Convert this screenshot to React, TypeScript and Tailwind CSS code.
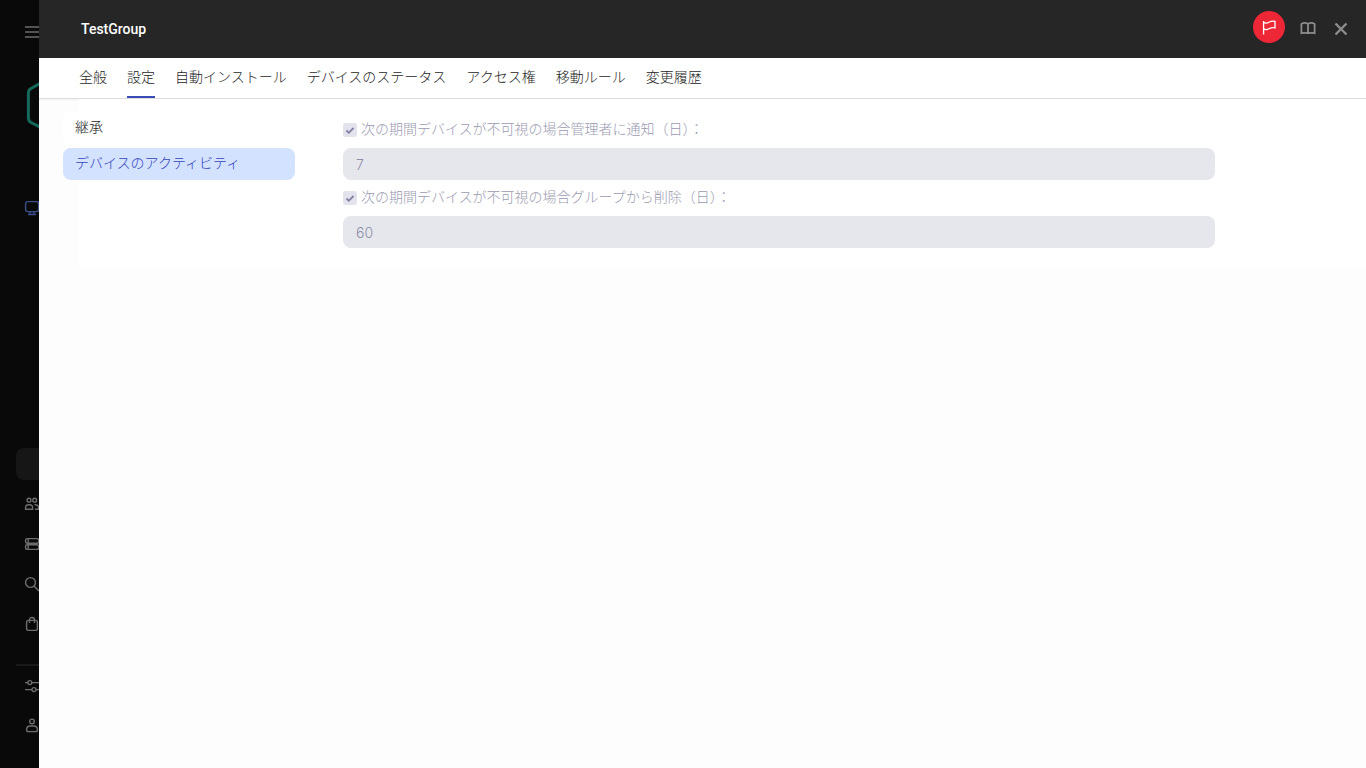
import type { ReactNode } from 'react'

const tabs = [
    '全般',
    '設定',
    '自動インストール',
    'デバイスのステータス',
    'アクセス権',
    '移動ルール',
    '変更履歴',
]

function SideIcon({ children, label }: { children: ReactNode; label: string }) {
    return (
        <a href="#" aria-label={label} className="flex h-10 w-full items-center pl-6">
            <svg className="size-4 shrink-0" viewBox="0 0 16 16" fill="none" stroke="currentColor" strokeWidth="1.4">
                {children}
            </svg>
        </a>
    )
}

function Sidebar() {
    return (
        <aside className="flex w-[39px] shrink-0 flex-col overflow-hidden bg-[#090909] text-[#6e6e6e]">
            <button aria-label="メニュー" className="mt-6 flex h-4 items-center pl-6">
                <svg className="size-4 shrink-0" viewBox="0 0 16 16" fill="none" stroke="currentColor" strokeWidth="1.7">
                    <path d="M1 3h15M1 8h15M1 13h15" />
                </svg>
            </button>
            <svg className="mt-9 ml-6 h-[58px] w-[52px] shrink-0" viewBox="0 0 52 58" fill="none" stroke="#14695a" strokeWidth="3" strokeLinejoin="round">
                <path d="M26 2 7 12.5Q4.400 14 4.400 17v25q0 3 2.600 4.500L26 56l19-9.500q2.600-1.500 2.600-4.500V17q0-3-2.600-4.500z" />
            </svg>
            <div className="mt-[54px] text-[#3a5088]">
                <SideIcon label="デバイス">
                    <rect x="1.600" y="1.600" width="13" height="10" rx="2" />
                    <path d="M6 12v2.500M10 12v2.500M4 14.500h8" />
                </SideIcon>
            </div>
            <div className="mt-[220px] ml-4 h-8 w-40 shrink-0 rounded-lg bg-[#161616]" />
            <nav className="mt-1">
                <SideIcon label="ユーザー">
                    <circle cx="5" cy="4.200" r="1.900" />
                    <circle cx="10.700" cy="4.200" r="1.900" />
                    <path d="M1.600 13.200v-1.700q0-2.800 2.800-2.800h1.400q2.800 0 2.800 2.800v1.700zM10.500 8.700h1.200q2.800 0 2.800 2.800v1.700h-3.600" />
                </SideIcon>
                <SideIcon label="サーバー">
                    <rect x="1.600" y="2.600" width="13" height="4.600" rx="1.500" />
                    <rect x="1.600" y="8.800" width="13" height="4.600" rx="1.500" />
                    <path d="M4.200 3v4M4.200 9v4" />
                </SideIcon>
                <SideIcon label="検索">
                    <circle cx="6.500" cy="6.500" r="4.900" />
                    <path d="m10 10 5 5" />
                </SideIcon>
                <SideIcon label="ストア">
                    <rect x="2.600" y="4.400" width="10.800" height="10" rx="1.800" />
                    <path d="M5.500 7V4q0-2.500 2.500-2.500T10.500 4v3" />
                </SideIcon>
            </nav>
            <div className="mt-5 ml-4 h-0.5 w-40 shrink-0 bg-[#191919]" />
            <nav>
                <SideIcon label="設定">
                    <circle cx="5.800" cy="4.600" r="2" />
                    <circle cx="10" cy="11.600" r="2" />
                    <path d="M1 4.600h2.800M7.800 4.600H16M1 11.600h7M12 11.600h4" />
                </SideIcon>
                <SideIcon label="アカウント">
                    <circle cx="8" cy="3.400" r="2.300" />
                    <path d="M2.600 11.700q0-3.700 3.700-3.700h3.400q3.700 0 3.700 3.700 0 1.900-1.900 1.900h-7q-1.900 0-1.900-1.900z" />
                </SideIcon>
            </nav>
        </aside>
    )
}

function Header() {
    return (
        <header className="flex h-[58px] items-center justify-between bg-[#262626] pr-[17px] pl-[42px]">
            <h1 className="font-['Roboto',sans-serif] text-sm font-medium text-white">TestGroup</h1>
            <div className="flex items-center pb-1 text-[#8c8c8c]">
                <button aria-label="フラグ" className="flex size-8 items-center justify-center rounded-full bg-[#ee2737] text-white">
                    <svg className="size-4" viewBox="0 0 16 16" fill="none" stroke="currentColor" strokeWidth="1.3">
                        <path d="M2.600 2v13.500M2.600 3.200c2 1.300 3.700 1 5.400 0s3.400-1.500 6-.9v6.600c-2.600-.6-4.300-.1-6 .9s-3.400 1.300-5.400 0" />
                    </svg>
                </button>
                <button aria-label="ヘルプ" className="mt-1 ml-[15px]">
                    <svg className="size-4" viewBox="0 0 16 16" fill="none" stroke="currentColor" strokeWidth="1.800">
                        <path d="M8 2.900Q6.500 1.900 4.700 1.900T1.400 2.900v9.300q1.400-.4 3.300-.4t3.300.4q1.400-.4 3.300-.4t3.300.4V2.900q-1.500-1-3.300-1T8 2.900zv9.300" />
                    </svg>
                </button>
                <button aria-label="閉じる" className="mt-1 ml-[17px]">
                    <svg className="size-4" viewBox="0 0 16 16" fill="none" stroke="currentColor" strokeWidth="2.400">
                        <path d="m2.500 2.500 11 11M13.500 2.500l-11 11" />
                    </svg>
                </button>
            </div>
        </header>
    )
}

function Field({ id, label, value }: { id: string; label: string; value: string }) {
    return (
        <div>
            <div className="flex h-9 items-center gap-1">
                <span className="relative size-3.5">
                    <input
                        id={id}
                        type="checkbox"
                        defaultChecked
                        disabled
                        className="block size-3.5 appearance-none rounded-[3px] bg-[#e3e3ee]"
                    />
                    <svg className="pointer-events-none absolute inset-0 size-3.5" viewBox="0 0 14 14" fill="none" stroke="#8080a0" strokeWidth="1.800">
                        <path d="m3.500 7.500 2.300 2.300 4.700-4.800" />
                    </svg>
                </span>
                <label htmlFor={id} className="pb-1 leading-5 text-[#9a9ab0]">
                    {label}
                </label>
            </div>
            <input
                type="text"
                aria-label={label}
                defaultValue={value}
                disabled
                className="block h-8 w-full rounded-lg bg-[#e6e7ec] px-[13px] font-['Inter',sans-serif] text-sm font-light text-[#8d8fa8]"
            />
        </div>
    )
}

export default function App() {
    return (
        <div className="flex min-h-screen bg-[#fdfdfd] font-['Noto_Sans_CJK_JP',sans-serif] text-sm font-extralight text-[#1d1d1d]">
            <Sidebar />
            <div className="min-w-0 flex-1">
                <Header />
                <nav className="flex h-[41px] gap-5 border-b border-[#dddddd] bg-white pl-10 shadow-xs">
                    {tabs.map((tab) => (
                        <a
                            key={tab}
                            href="#"
                            className={
                                tab === '設定'
                                    ? 'h-10 border-b-2 border-[#3b4cb8] leading-9 whitespace-nowrap'
                                    : 'h-10 leading-9 whitespace-nowrap'
                            }
                        >
                            {tab}
                        </a>
                    ))}
                </nav>
                <main className="ml-10 flex bg-white pt-[13px] pb-[19px]">
                    <nav className="-ml-4 flex w-[232px] shrink-0 flex-col gap-1">
                        <a href="#" className="h-8 rounded-lg bg-white px-3 leading-7">
                            継承
                        </a>
                        <a href="#" className="h-8 rounded-lg bg-[#d3e2ff] px-3 leading-7 text-[#3443b8]">
                            デバイスのアクティビティ
                        </a>
                    </nav>
                    <form className="min-w-0 flex-1 pr-[151px] pl-12">
                        <Field id="notify" label="次の期間デバイスが不可視の場合管理者に通知（日）：" value="7" />
                        <Field id="remove" label="次の期間デバイスが不可視の場合グループから削除（日）：" value="60" />
                    </form>
                </main>
            </div>
        </div>
    )
}
